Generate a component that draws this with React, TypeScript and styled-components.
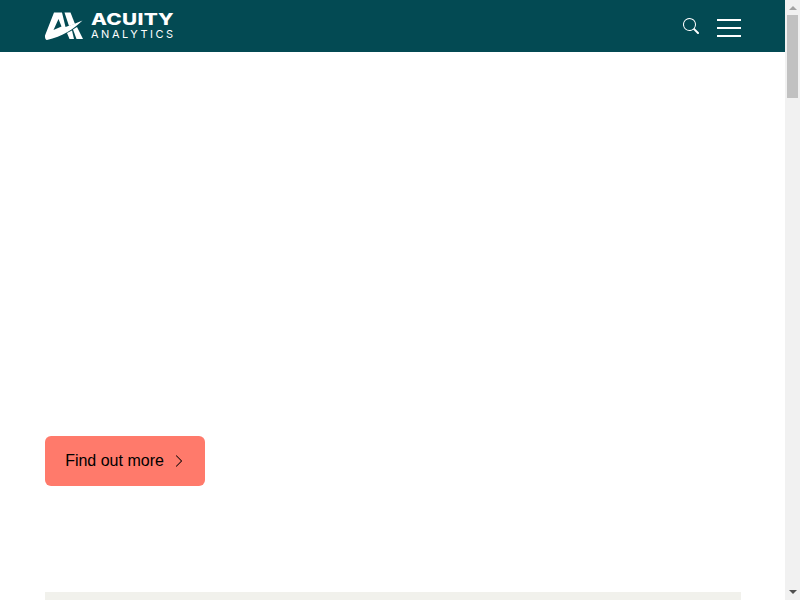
import styled, { createGlobalStyle } from 'styled-components'
import { BsChevronRight, BsSearch } from 'react-icons/bs'

const GlobalStyle = createGlobalStyle`
	html, body {
		margin: 0;
		padding: 0;
		height: 100%;
		overflow: hidden;
		background: #fff;
		font-family: "Liberation Sans", Arial, sans-serif;
	}
`

const LogoMark = () => (
	<svg width="38" height="28" viewBox="45 12 38 28" fill="#fff">
		<path fillRule="evenodd" d="M45 35.5 L54 12.5 H62 L65.5 27 C71 25 77 23 82.5 20.5 C75 28 62 37 47 40 C45.5 40.2 44.8 38 45 35.5 Z M58.5 19 L53.5 30 L61.5 26.5 Z" />
		<path d="M64.5 12.5 H70.5 L75 24 L69 26 Z" />
		<path d="M67 33 L72 30.5 L74 39 H69.5 Z" />
		<path d="M73 29.5 L77 27 L83 39 H76.5 Z" />
	</svg>
)

export default function App() {
	return (
		<>
			<GlobalStyle />
			<Shell>
				<Page>
					<Header>
						<Logo>
							<LogoMark />
							<Wordmark>
								<Name>ACUITY</Name>
								<Sub>ANALYTICS</Sub>
							</Wordmark>
						</Logo>
						<Actions>
							<SearchButton aria-label="Search">
								<BsSearch size={16} />
							</SearchButton>
							<MenuButton aria-label="Menu">
								<MenuLine />
								<MenuLine />
								<MenuLine />
							</MenuButton>
						</Actions>
					</Header>
					<Main>
						<Hero>
							<Cta href="#">
								Find out more
								<BsChevronRight size={14} />
							</Cta>
						</Hero>
						<Panel />
					</Main>
				</Page>
				<Scrollbar aria-hidden="true">
					<ArrowUp />
					<Thumb />
					<ArrowDown />
				</Scrollbar>
			</Shell>
		</>
	)
}

const Shell = styled.div`
	display: flex;
	height: 100vh;
`

const Page = styled.div`
	flex: 1;
	min-width: 0;
	overflow-y: auto;
`

const Header = styled.header`
	display: flex;
	align-items: center;
	justify-content: space-between;
	height: 52px;
	padding: 0 44px 0 45px;
	background: #034a53;
`

const Logo = styled.a`
	display: flex;
	align-items: center;
	gap: 8px;
`

const Wordmark = styled.div`
	display: flex;
	flex-direction: column;
	gap: 5px;
	margin-top: 0;
	color: #fff;
`

const Name = styled.span`
	font-family: "Inter", sans-serif;
	font-size: 16px;
	font-weight: 800;
	line-height: 12px;
	letter-spacing: 0.2px;
	transform: scaleX(1.3);
	transform-origin: left;
`

const Sub = styled.span`
	font-family: "Inter", sans-serif;
	font-size: 11px;
	font-weight: 400;
	line-height: 9px;
	letter-spacing: 2.5px;
`

const Actions = styled.div`
	display: flex;
	align-items: center;
	gap: 18px;
`

const SearchButton = styled.button`
	display: flex;
	padding: 0;
	margin-top: -1px;
	border: 0;
	background: none;
	color: #fff;
`

const MenuButton = styled.button`
	display: flex;
	flex-direction: column;
	gap: 6px;
	width: 24px;
	padding: 0;
	margin-top: 4px;
	border: 0;
	background: none;
`

const MenuLine = styled.span`
	display: block;
	height: 2px;
	background: #fff;
`

const Main = styled.main`
	padding: 0 44px 0 45px;
`

const Hero = styled.section`
	padding: 384px 0 106px;
`

const Cta = styled.a`
	display: inline-flex;
	align-items: center;
	justify-content: center;
	gap: 8px;
	box-sizing: border-box;
	width: 160px;
	height: 50px;
	padding-left: 1px;
	border-radius: 6px;
	background: #ff7a6b;
	color: #000;
	font-size: 16px;
	text-decoration: none;
`

const Panel = styled.div`
	height: 3528px;
	background: #f1f1ec;
`

const Scrollbar = styled.aside`
	display: flex;
	flex-direction: column;
	align-items: center;
	flex: none;
	width: 15px;
	background: #f1f1f1;
`

const ArrowUp = styled.span`
	flex: none;
	width: 0;
	height: 0;
	margin: 6px 0 5px;
	border-left: 4px solid transparent;
	border-right: 4px solid transparent;
	border-bottom: 4px solid #a3a3a3;
`

const Thumb = styled.span`
	flex: none;
	width: 11px;
	height: 83px;
	background: #c1c1c1;
`

const ArrowDown = styled.span`
	flex: none;
	width: 0;
	height: 0;
	margin: auto 0 6px;
	border-left: 4px solid transparent;
	border-right: 4px solid transparent;
	border-top: 4px solid #505050;
`
